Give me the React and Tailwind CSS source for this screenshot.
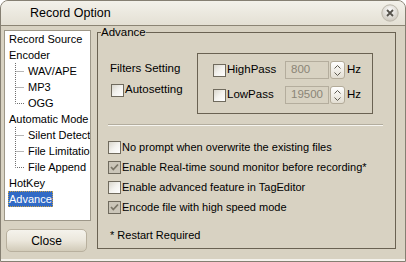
import React from "react";

const font = { fontFamily: '"Liberation Sans", Arial, sans-serif' };

function Check({ checked }) {
  return (
    <span
      className={
        "relative w-[13px] h-[13px] shrink-0 border border-[#6f6a5d] " +
        (checked
          ? "bg-[#cbc6b9]"
          : "bg-gradient-to-br from-[#d9d6cc] via-[#f3f2ee] to-white")
      }
    >
      {checked && (
        <svg width="11" height="11" viewBox="0 0 11 11" className="absolute left-0 top-0">
          <path d="M2 5 L4.3 7.5 L9 2.5" fill="none" stroke="#7b7668" strokeWidth="1.8" />
        </svg>
      )}
    </span>
  );
}

function Spin() {
  return (
    <div className="w-[15px] h-[18px] rounded-[3px] border border-[#b3ab99] bg-gradient-to-b from-white to-[#e3ded2] flex flex-col items-center justify-center gap-[3px]">
      <svg width="7" height="4" viewBox="0 0 7 4">
        <path d="M0.5 3.5 L3.5 0.5 L6.5 3.5" fill="none" stroke="#5d594f" strokeWidth="1" />
      </svg>
      <svg width="7" height="4" viewBox="0 0 7 4">
        <path d="M0.5 0.5 L3.5 3.5 L6.5 0.5" fill="none" stroke="#5d594f" strokeWidth="1" />
      </svg>
    </div>
  );
}

function Branch({ last }) {
  return (
    <svg width="19" height="16" className="shrink-0">
      <path
        d={last ? "M10.5 0 V8.5 H19" : "M10.5 0 V16 M10.5 8.5 H19"}
        fill="none"
        stroke="#6f6f6f"
        strokeWidth="1"
        strokeDasharray="1 1"
      />
    </svg>
  );
}

function Top({ children, selected }) {
  return (
    <div className="h-[16px] flex items-center pl-[3px]">
      <span
        className={
          "px-[1px] leading-[16px] " +
          (selected ? "bg-[#316ac5] text-white outline outline-1 outline-dotted outline-[#c9a24a] -outline-offset-1" : "text-black")
        }
      >
        {children}
      </span>
    </div>
  );
}

function Child({ children, last }) {
  return (
    <div className="h-[16px] flex items-center">
      <Branch last={last} />
      <span className="pl-[4px] whitespace-nowrap">{children}</span>
    </div>
  );
}

function Row({ checked, children }) {
  return (
    <div className="h-[20px] flex items-center gap-[1px] whitespace-nowrap">
      <Check checked={checked} />
      <span>{children}</span>
    </div>
  );
}

export default function App() {
  return (
    <div
      className="w-[406px] h-[262px] bg-[#d8d2c2] rounded-t-[8px] border border-[#857f72] flex flex-col overflow-hidden text-[11px] text-black"
      style={font}
    >
      <div className="h-[25px] shrink-0 flex items-center pl-[29px] pr-[6px] bg-gradient-to-b from-[#f3f1ea] to-[#e4e0d4] border-b border-[#8b8474]">
        <span className="text-[12.5px] flex-1">Record Option</span>
        <svg width="18" height="18" viewBox="0 0 18 18">
          <defs>
            <radialGradient id="cg" cx="50%" cy="35%" r="60%">
              <stop offset="0" stopColor="#ffffff" />
              <stop offset="1" stopColor="#cfcac0" />
            </radialGradient>
          </defs>
          <circle cx="9" cy="9" r="8.2" fill="url(#cg)" stroke="#bdb8ac" />
          <path d="M6 6 L12 12 M12 6 L6 12" stroke="#55524b" strokeWidth="1.8" />
        </svg>
      </div>

      <div className="flex flex-1 min-h-0 border-b-[2px] border-[#f4f2ec]">
        <div className="w-[87px] ml-[3px] mt-[4px] flex flex-col shrink-0">
          <div className="h-[191px] bg-white border border-[#9d9788] overflow-hidden whitespace-nowrap">
            <Top>Record Source</Top>
            <Top>Encoder</Top>
            <Child>WAV/APE</Child>
            <Child>MP3</Child>
            <Child last>OGG</Child>
            <Top>Automatic Mode</Top>
            <Child>Silent Detect</Child>
            <Child>File Limitation</Child>
            <Child last>File Append</Child>
            <Top>HotKey</Top>
            <Top selected>Advance</Top>
          </div>
          <button className="mt-[8px] ml-[2px] w-[81px] h-[23px] rounded-[5px] border border-[#b8b09e] bg-gradient-to-b from-[#f5f3ec] via-[#ebe7dc] to-[#d2cbb9] text-[12px] flex items-center justify-center">
            Close
          </button>
        </div>

        <fieldset className="ml-[6px] w-[299px] h-[223px] border border-[#6a6252] px-[10px] text-[11px]">
          <legend className="-ml-[7px] px-0 leading-[13px] text-[11.5px]">Advance</legend>

          <div className="flex mt-[14px]">
            <div className="w-[89px] flex flex-col pt-[9px]">
              <div className="h-[14px] flex items-center pl-[2px] text-[11.5px]">Filters Setting</div>
              <div className="mt-[7px] flex items-center gap-[1px] h-[14px] pl-[3px] text-[11.5px]">
                <Check />
                <span>Autosetting</span>
              </div>
            </div>
            <div className="w-[176px] h-[61px] border border-[#6a6252] pl-[15px] pt-[7px] flex flex-col gap-[7px] text-[11.5px]">
              <div className="flex items-center h-[18px]">
                <div className="w-[72px] flex items-center gap-[1px]">
                  <Check />
                  <span>HighPass</span>
                </div>
                <div className="w-[44px] h-[18px] border border-[#b4ad9d] text-[#8b8577] flex items-center pl-[5px]">800</div>
                <div className="ml-[1px]"><Spin /></div>
                <span className="ml-[2px]">Hz</span>
              </div>
              <div className="flex items-center h-[18px]">
                <div className="w-[72px] flex items-center gap-[1px]">
                  <Check />
                  <span>LowPass</span>
                </div>
                <div className="w-[44px] h-[18px] border border-[#b4ad9d] text-[#8b8577] flex items-center pl-[5px]">19500</div>
                <div className="ml-[1px]"><Spin /></div>
                <span className="ml-[2px]">Hz</span>
              </div>
            </div>
          </div>

          <div className="mt-[10px] w-[275px] border-t border-[#b3ad9e] border-b border-b-[#f6f5f0]" />

          <div className="mt-[11px] flex flex-col">
            <Row>No prompt when overwrite the existing files</Row>
            <Row checked>Enable Real-time sound monitor before recording*</Row>
            <Row>Enable advanced feature in TagEditor</Row>
            <Row checked>Encode file with high speed mode</Row>
          </div>
          <div className="mt-[8px] ml-[2px] h-[20px] flex items-center">* Restart Required</div>
        </fieldset>
      </div>
    </div>
  );
}
